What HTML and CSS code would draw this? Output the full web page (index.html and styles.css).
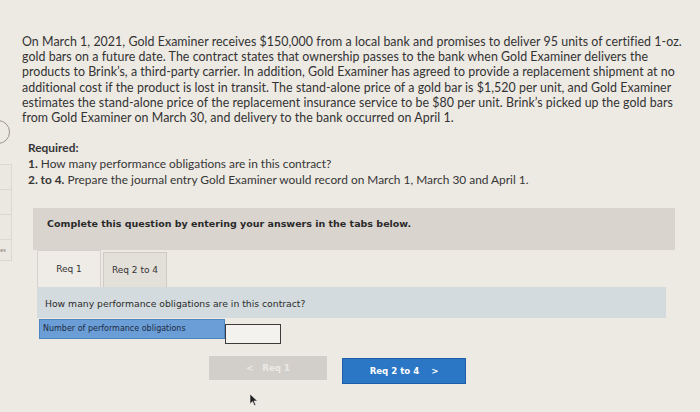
FILE: index.html
```html
<!DOCTYPE html>
<html>
<head>
<meta charset="utf-8">
<link rel="stylesheet" href="styles.css">
</head>
<body>
<div class="page">
  <aside class="side">
    <div class="side-circle"></div>
    <div class="side-box"></div>
    <div class="side-box"></div>
    <div class="side-box"></div>
    <div class="side-box last"><span>es</span></div>
  </aside>
  <main class="main">
    <p class="intro">On March 1, 2021, Gold Examiner receives $150,000 from a local bank and promises to deliver 95 units of certified <span class="nowrap">1-oz.</span> gold bars on a future date. The contract states that ownership passes to the bank when Gold Examiner delivers the products to Brink’s, a third-party carrier. In addition, Gold Examiner has agreed to provide a replacement shipment at no additional cost if the product is lost in transit. The stand-alone price of a gold bar is $1,520 per unit, and Gold Examiner estimates the stand-alone price of the replacement insurance service to be $80 per unit. Brink’s picked up the gold bars from Gold Examiner on March 30, and delivery to the bank occurred on April 1.</p>
    <div class="required">
      <div class="req-title">Required:</div>
      <div><b>1.</b> How many performance obligations are in this contract?</div>
      <div><b>2. to 4.</b> Prepare the journal entry Gold Examiner would record on March 1, March 30 and April 1.</div>
    </div>
    <div class="notice">Complete this question by entering your answers in the tabs below.</div>
    <div class="tabs">
      <div class="tab active">Req 1</div>
      <div class="tab">Req 2 to 4</div>
    </div>
    <div class="question">How many performance obligations are in this contract?</div>
    <div class="answer-row">
      <div class="answer-label">Number of performance obligations</div>
      <div class="answer-input"></div>
    </div>
    <div class="nav">
      <div class="btn prev">&lt;&nbsp;&nbsp;&nbsp;Req 1</div>
      <div class="btn next">Req 2 to 4&nbsp;&nbsp;&nbsp;&nbsp;&gt;</div>
    </div>
    <div class="cursor-wrap">
      <svg class="cursor" width="10" height="14" viewBox="0 0 10 14"><path d="M1 1 L1 11 L3.5 8.6 L5.4 12.6 L6.8 12 L5 8 L8.4 8 Z" fill="#222" stroke="#eee" stroke-width="0.6"/></svg>
    </div>
  </main>
</div>
</body>
</html>
```
FILE: styles.css
```css
html, body {
  margin: 0;
  padding: 0;
}
body {
  background: #ede9e3;
  width: 700px;
  height: 412px;
  overflow: hidden;
  font-family: Lato, "Open Sans", sans-serif;
  color: #2c2c2c;
}
.page {
  display: flex;
  height: 412px;
  position: relative;
}
.side {
  width: 12px;
  flex: none;
  padding-top: 120px;
  display: flex;
  flex-direction: column;
}
.side-circle {
  width: 22px;
  height: 22px;
  border: 1px solid #9a948e;
  border-radius: 50%;
  margin-left: -14px;
  margin-bottom: 20px;
}
.side-box {
  height: 24px;
  border-top: 1px solid #dcd7d1;
  border-right: 1px solid #dcd7d1;
  background: #ebe7e1;
}
.side-box.last {
  height: 22px;
  border-bottom: 1px solid #dcd7d1;
  font-size: 6px;
  color: #8c8680;
  padding-top: 6px;
  box-sizing: border-box;
}
.main {
  flex: 1;
  padding-left: 10px;
  padding-top: 34px;
}
.intro {
  margin: 0;
  width: 668px;
  font-size: 12.4px;
  line-height: 15.2px;
  letter-spacing: 0.05px;
  color: #333;
}
.nowrap {
  white-space: nowrap;
}
.required {
  margin-top: 15px;
  margin-left: 6px;
  font-size: 11.9px;
  line-height: 16px;
  color: #363636;
}
.req-title {
  font-weight: bold;
}
.notice {
  margin-top: 20px;
  margin-left: 11px;
  width: 642px;
  height: 42px;
  box-sizing: border-box;
  background: #d9d4ce;
  padding: 10px 14px;
  font-family: "DejaVu Sans", Verdana, sans-serif;
  font-weight: bold;
  font-size: 9.5px;
  color: #2a2a2a;
}
.tabs {
  display: flex;
  margin-left: 15px;
  margin-top: 0;
  align-items: flex-end;
  height: 37px;
}
.tab {
  width: 64px;
  height: 35px;
  box-sizing: border-box;
  border: 1px solid #cfcac4;
  border-bottom: none;
  background: #e3dfd9;
  font-family: "DejaVu Sans", Verdana, sans-serif;
  font-size: 9px;
  color: #333;
  display: flex;
  align-items: center;
  justify-content: center;
  margin-right: 2px;
}
.tab.active {
  height: 37px;
  background: #efebe6;
  border-color: #d6d1cb;
}
.question {
  margin-left: 15px;
  width: 629px;
  height: 31px;
  box-sizing: border-box;
  background: #d3dbde;
  padding: 11px 8px 0;
  font-family: "DejaVu Sans", Verdana, sans-serif;
  font-size: 9.25px;
  color: #2a2a2a;
}
.answer-row {
  display: flex;
  margin-left: 17px;
  margin-top: 1px;
  align-items: flex-start;
}
.answer-label {
  width: 186px;
  height: 20px;
  box-sizing: border-box;
  background: #6b9ed6;
  border: 1px solid #4f84c2;
  font-family: "DejaVu Sans", Verdana, sans-serif;
  font-size: 8px;
  color: #1e2a44;
  padding: 4px 3px 0;
}
.answer-input {
  width: 56px;
  height: 20px;
  margin-top: 5px;
  box-sizing: border-box;
  background: #f4f2ee;
  border: 1.5px solid #3c3c3c;
}
.nav {
  display: flex;
  margin-left: 187px;
  margin-top: 12px;
  gap: 15px;
  align-items: flex-start;
}
.btn {
  height: 24px;
  box-sizing: border-box;
  display: flex;
  align-items: center;
  justify-content: center;
  font-family: "DejaVu Sans", Verdana, sans-serif;
  font-weight: bold;
  font-size: 8.6px;
}
.btn.prev {
  width: 118px;
  background: #d2cfcb;
  color: #ebe9e6;
}
.btn.next {
  width: 124px;
  height: 26px;
  margin-top: 2px;
  background: #2b76c5;
  color: #fff;
  border: 1px solid #1d5fa8;
}
.cursor-wrap {
  margin-left: 227px;
  margin-top: 9px;
}
.cursor {
  display: block;
}
```
